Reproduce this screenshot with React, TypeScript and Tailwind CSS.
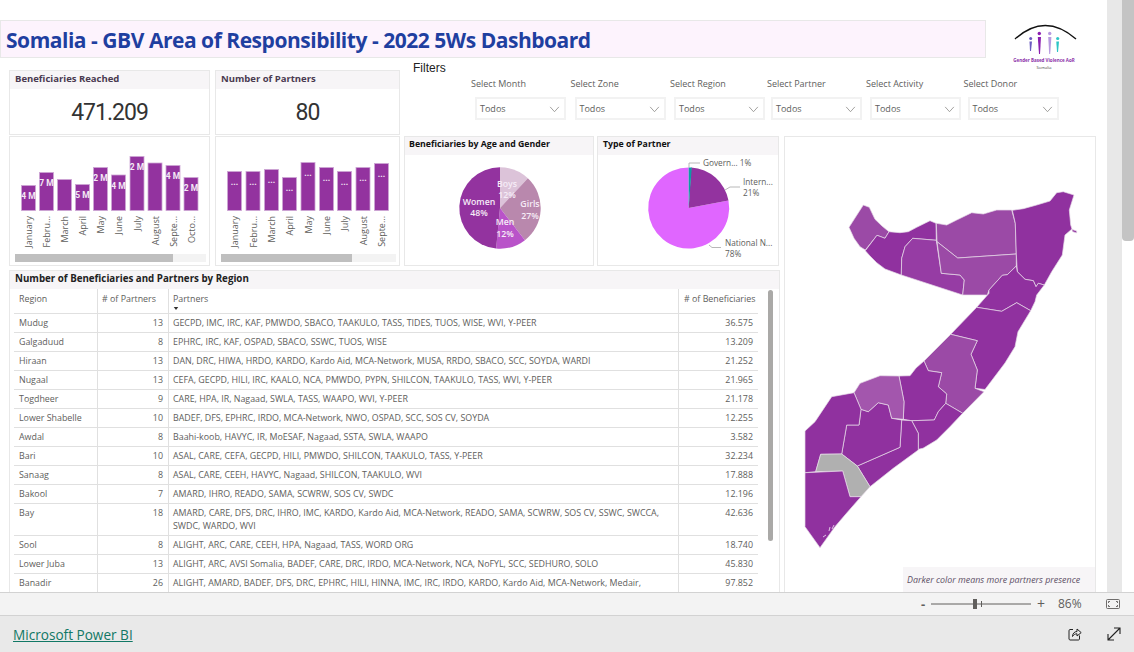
import { Fragment } from 'react';

const BAR = '#93339f';

const beneficiaryBars = [
  { x: 21.5, top: 185.5, label: '4 M', month: 'January' },
  { x: 39.5, top: 172.5, label: '7 M', month: 'Febru...' },
  { x: 57.5, top: 179.5, label: '', month: 'March' },
  { x: 75.5, top: 184.5, label: '5 M', month: 'April' },
  { x: 93.5, top: 167.5, label: '2 M', month: 'May' },
  { x: 111.5, top: 175, label: '4 M', month: 'June' },
  { x: 130, top: 156.5, label: '2 M', month: 'July' },
  { x: 148, top: 163, label: '', month: 'August' },
  { x: 166, top: 165.5, label: '4 M', month: 'Septe...' },
  { x: 184, top: 177.5, label: '2 M', month: 'Octo...' },
];

const partnerBars = [
  { x: 227.5, top: 171.5, label: '...', month: 'January' },
  { x: 246, top: 171.5, label: '...', month: 'Febru...' },
  { x: 264.5, top: 169.5, label: '...', month: 'March' },
  { x: 282.5, top: 177.5, label: '...', month: 'April' },
  { x: 301, top: 162.5, label: '...', month: 'May' },
  { x: 319.5, top: 167.5, label: '...', month: 'June' },
  { x: 337.5, top: 171.5, label: '...', month: 'July' },
  { x: 356, top: 167.5, label: '...', month: 'August' },
  { x: 374.5, top: 163.5, label: '...', month: 'Septe...' },
];

const filters = [
  { label: 'Select Month', col: 'w-[99.5px]' },
  { label: 'Select Zone', col: 'w-[99.5px]' },
  { label: 'Select Region', col: 'w-[97px]' },
  { label: 'Select Partner', col: 'w-[99px]' },
  { label: 'Select Activity', col: 'w-[97.5px]' },
  { label: 'Select Donor', col: 'w-[95px]' },
];

const rows = [
  ['Mudug', '13', 'GECPD, IMC, IRC, KAF, PMWDO, SBACO, TAAKULO, TASS, TIDES, TUOS, WISE, WVI, Y-PEER', '36.575'],
  ['Galgaduud', '8', 'EPHRC, IRC, KAF, OSPAD, SBACO, SSWC, TUOS, WISE', '13.209'],
  ['Hiraan', '13', 'DAN, DRC, HIWA, HRDO, KARDO, Kardo Aid, MCA-Network, MUSA, RRDO, SBACO, SCC, SOYDA, WARDI', '21.252'],
  ['Nugaal', '13', 'CEFA, GECPD, HILI, IRC, KAALO, NCA, PMWDO, PYPN, SHILCON, TAAKULO, TASS, WVI, Y-PEER', '21.965'],
  ['Togdheer', '9', 'CARE, HPA, IR, Nagaad, SWLA, TASS, WAAPO, WVI, Y-PEER', '21.178'],
  ['Lower Shabelle', '10', 'BADEF, DFS, EPHRC, IRDO, MCA-Network, NWO, OSPAD, SCC, SOS CV, SOYDA', '12.255'],
  ['Awdal', '8', 'Baahi-koob, HAVYC, IR, MoESAF, Nagaad, SSTA, SWLA, WAAPO', '3.582'],
  ['Bari', '10', 'ASAL, CARE, CEFA, GECPD, HILI, PMWDO, SHILCON, TAAKULO, TASS, Y-PEER', '32.234'],
  ['Sanaag', '8', 'ASAL, CARE, CEEH, HAVYC, Nagaad, SHILCON, TAAKULO, WVI', '17.888'],
  ['Bakool', '7', 'AMARD, IHRO, READO, SAMA, SCWRW, SOS CV, SWDC', '12.196'],
  ['Bay', '18', 'AMARD, CARE, DFS, DRC, IHRO, IMC, KARDO, Kardo Aid, MCA-Network, READO, SAMA, SCWRW, SOS CV, SSWC, SWCCA,\nSWDC, WARDO, WVI', '42.636'],
  ['Sool', '8', 'ALIGHT, ARC, CARE, CEEH, HPA, Nagaad, TASS, WORD ORG', '18.740'],
  ['Lower Juba', '13', 'ALIGHT, ARC, AVSI Somalia, BADEF, CARE, DRC, IRDO, MCA-Network, NCA, NoFYL, SCC, SEDHURO, SOLO', '45.830'],
  ['Banadir', '26', 'ALIGHT, AMARD, BADEF, DFS, DRC, EPHRC, HILI, HINNA, IMC, IRC, IRDO, KARDO, Kardo Aid, MCA-Network, Medair,', '97.852'],
];

// map regions, in page coordinates
const DARK = '#90319f';
const regions = [
  { fill: '#9b4aa6', d: 'M849 227.3L863.3 205L869.3 207.3L875 219.3L882 226L889 231.7L885 238.3L877 235.3L865.3 250L860 246.7L854 238.3Z' },
  { fill: DARK, d: 'M889 231.7L900 232.7L908.3 231.7L916.7 227.3L930 220.7L936 223.3L936.3 240.3L912.7 238.3L905 246.7L901.7 258.3L901.3 275L885 269L876.7 262.7L870 256L865.3 250.7L877 235.3L885 238.3Z' },
  { fill: '#963ca4', d: 'M912.7 238.3L936.3 240.3L941.3 273.3L960 275L964.3 280L962.7 295L901.3 275L901.7 258.3L905 246.7Z' },
  { fill: '#9b4aa6', d: 'M936.3 223.3L946.7 225L956.7 220L971.7 212.7L983.3 214L996.7 210L1011.7 210L1015.3 223.3L1016.3 254L957.7 258L937 241.7Z' },
  { fill: '#9b4aa6', d: 'M937 241.7L957.7 258L1016.3 254L1016.3 266L1007.3 274.7L1002.3 275.3L989 290L987.3 295L962.7 295L964.3 280L960 275L941.3 273.3Z' },
  { fill: DARK, d: 'M1012.3 210.3L1023.3 208.7L1036.7 205L1050 201L1056.7 192.7L1063.3 191.7L1074 195L1069.3 210L1070.7 225L1072 229L1065 235L1062.3 255L1051.7 271.7L1044.3 285L1038.3 283.3L1036 286.7L1033.3 280.7L1025 279.3L1017.3 271.7L1016.3 254L1015.3 223.3Z' },
  { fill: DARK, d: 'M1071.7 229.3L1076.7 231L1076.7 233L1072.7 231.7Z' },
  { fill: DARK, d: 'M1016.3 266L1017.3 271.7L1025 279.3L1033.3 280.7L1036 286.7L1038.3 283.3L1044.3 285L1036.7 295L1035 301.7L1030.7 310.7L1016.7 302.7L1001.7 311.3L976.7 307.3L989 293.3L989 290L1002.3 275.3L1007.3 274.7Z' },
  { fill: DARK, d: 'M976.7 307.3L1001.7 311.3L1016.7 302.7L1030.7 310.7L1018 331.7L1015 346.7L1005 363L985 389.5L975 388.3L977.3 370L971 354.3L977.3 340.7L950.7 334.3Z' },
  { fill: '#9b4aa6', d: 'M950.7 334.3L977.3 340.7L971 354.3L977.3 370L975 388.3L984 391.7L962.7 413.3L945.7 403.3L946.7 394L938.3 386.7L941.7 372.7L928.3 370.7L924 361Z' },
  { fill: DARK, d: 'M924 361L916 368L910 375.7L899 376L904 401.7L903.3 419.3L911.7 420.7L934.3 420L938.3 411.7L945.7 403.3L946.7 394L938.3 386.7L941.7 372.7L928.3 370.7Z' },
  { fill: DARK, d: 'M911.7 420.7L918.3 433.3L918.3 449.3L923 448.3L936.7 440L950 426.7L962.7 413.3L945.7 403.3L938.3 411.7L934.3 420Z' },
  { fill: DARK, d: 'M901.7 420L900 447.3L857.3 466L870 486.7L893.3 468.3L918.3 450L918.3 433.3L911.7 420.7Z' },
  { fill: DARK, d: 'M861 409.3L868.3 411.7L878.3 402.7L888.3 405L891.7 418.3L901.7 420L900 447.3L857.3 466L841.7 454L846.7 425L859 425Z' },
  { fill: '#a356ad', d: 'M854 392.7L860 383.3L880 375.7L899 376L904 401.7L903.3 419.3L891.7 418.3L888.3 405L878.3 402.7L868.3 411.7L861 409.3Z' },
  { fill: DARK, d: 'M805 431L815 421.7L831.7 396.7L854 392.7L861 409.3L859 425L846.7 425L841.7 454L820.7 454.3L815.7 471.7L805 472.7Z' },
  { fill: '#b0b0b0', d: 'M820.7 454.3L841.7 454L857.3 466L870 486.7L861 496.7L850 496.7L842.7 471L815.7 471.7Z' },
  { fill: DARK, d: 'M805 472.7L842.7 471L850 496.7L861 496.7L845 515L835 526.7L820 547.7L805 526.7Z' },
];

function slice(cx: number, cy: number, r: number, from: number, to: number) {
  const a = (from / 100) * 2 * Math.PI;
  const b = (to / 100) * 2 * Math.PI;
  const large = to - from > 50 ? 1 : 0;
  const x1 = cx + r * Math.sin(a);
  const y1 = cy - r * Math.cos(a);
  const x2 = cx + r * Math.sin(b);
  const y2 = cy - r * Math.cos(b);
  return `M${cx} ${cy}L${x1} ${y1}A${r} ${r} 0 ${large} 1 ${x2} ${y2}Z`;
}

function CardHeader({ title, tone }: { title: string; tone: string }) {
  return <div className={`h-[18px] bg-[#f7f5f7] font-bold whitespace-nowrap ${tone}`}>{title}</div>;
}

function ColumnChart({
  box,
  bars,
  track,
  thumb,
  wide,
}: {
  box: string;
  bars: { x: number; top: number; label: string; month: string }[];
  track: number[];
  thumb: number;
  wide: string;
}) {
  return (
    <div className={`h-[130px] shrink-0 border border-[#e8e8e8] bg-white ${wide}`}>
      <svg viewBox={box} className="block h-full w-full">
        {bars.map((b) => (
          <Fragment key={b.month}>
            <rect x={b.x} y={b.top} width={14} height={210.5 - b.top} fill={BAR} stroke="#cda6d4" strokeWidth={0.8} />
            {b.label && (
              <text
                x={b.x + 7}
                y={b.top + 13.5}
                textAnchor="middle"
                className="fill-[#f4e9f5] font-['Roboto',sans-serif] text-[8.5px] font-bold"
              >
                {b.label}
              </text>
            )}
            <text
              x={0}
              y={0}
              textAnchor="end"
              transform={`translate(${b.x + 10.5} 216) rotate(-90)`}
              className="fill-[#605e5c] text-[9px]"
            >
              {b.month}
            </text>
          </Fragment>
        ))}
        <rect x={track[0]} y={254} width={track[1] - track[0]} height={8} fill="#f3f3f3" />
        <rect x={track[0]} y={254} width={thumb - track[0]} height={8} fill="#bfbfbf" />
      </svg>
    </div>
  );
}

function Logo() {
  return (
    <div className="mt-[4px] ml-[27px] flex w-[66px] shrink-0 flex-col items-center">
      <svg viewBox="1013 25 66 32" className="block h-[32px] w-[66px] shrink-0">
        <path d="M1015 40Q1045 13 1076 40" fill="none" stroke="#111" strokeWidth={1.4} />
        <circle cx={1030.7} cy={39.5} r={1.5} fill="#6b5bc0" />
        <path d="M1029.5 42.5H1032L1031 52H1030Z" fill="#6b5bc0" />
        <circle cx={1039.3} cy={34.5} r={1.7} fill="#8b1fb0" />
        <path d="M1037.8 38H1041L1040 55H1039Z" fill="#8b1fb0" />
        <circle cx={1049.7} cy={34.5} r={1.7} fill="#b79be0" />
        <path d="M1048.2 38H1051.4L1050.2 55H1049.2Z" fill="#b79be0" />
        <circle cx={1057.7} cy={39.5} r={1.6} fill="#2cc5c5" />
        <path d="M1056.3 42.5H1059L1058 53H1057Z" fill="#2cc5c5" />
      </svg>
      <div className="mt-[1px] -ml-[4px] shrink-0 text-[4.5px] leading-[7px] font-bold whitespace-nowrap text-[#8a2fa8]">Gender Based Violence AoR</div>
      <div className="mt-[1px] -ml-[4px] shrink-0 text-[4px] leading-[6px] whitespace-nowrap text-[#444]">Somalia</div>
    </div>
  );
}

export default function App() {
  return (
    <div className="flex h-[652px] w-[1134px] flex-col overflow-hidden bg-white font-['Open_Sans',sans-serif]">
      <div className="flex h-[592px] shrink-0">
        <main className="w-[1107px] shrink-0 overflow-hidden">
          {/* titulo */}
          <div className="flex h-[58px] pt-[20px]">
            <div className="h-[38px] w-[986px] shrink-0 border border-[#e8e8e8] bg-[#fdf3fd] pl-[5px] text-[21px] leading-[39px] font-bold tracking-[-0.47px] whitespace-nowrap text-[#1f3fa0]">
              Somalia - GBV Area of Responsibility - 2022 5Ws Dashboard
            </div>
            <Logo />
          </div>

          {/* kpis y filtros */}
          <div className="flex h-[78px] pl-[9px]">
            <div className="flex gap-[5px] pt-[12px]">
              <div className="h-[65px] w-[201px] border border-[#e8e8e8]">
                <CardHeader title="Beneficiaries Reached" tone="pl-[5px] text-[9.5px] leading-[15px] text-[#4a3a50]" />
                <div className="pt-[4px] text-center font-['Roboto',sans-serif] text-[23px] leading-[40px] tracking-[-1px] text-[#333]">471.209</div>
              </div>
              <div className="h-[65px] w-[185px] border border-[#e8e8e8]">
                <CardHeader title="Number of Partners" tone="pl-[5px] text-[9.5px] leading-[15px] text-[#4a3a50]" />
                <div className="pt-[4px] text-center font-['Roboto',sans-serif] text-[23px] leading-[40px] tracking-[-1px] text-[#333]">80</div>
              </div>
            </div>
            <div className="ml-[13px] pt-[3px]">
              <div className="font-['Liberation_Sans',sans-serif] text-[12px] leading-[14px] text-[#222]">Filters</div>
              <div className="mt-[2px] ml-[58px] flex">
                {filters.map((f) => (
                  <div key={f.label} className={`shrink-0 ${f.col}`}>
                    <div className="h-[14px] text-[9px] leading-[14px] whitespace-nowrap text-[#605e5c]">{f.label}</div>
                    <div className="mt-[6px] ml-[4px] flex h-[23px] w-[91px] items-center justify-between border-2 border-[#f2f2f2] bg-white pt-[1px] pr-[4px] pl-[3px] text-[9px] text-[#605e5c]">
                      Todos
                      <svg viewBox="0 0 12 8" className="h-[7px] w-[11px]">
                        <path d="M1 1L6 6.5L11 1" fill="none" stroke="#8a8886" strokeWidth={0.9} />
                      </svg>
                    </div>
                  </div>
                ))}
              </div>
            </div>
          </div>

          {/* graficos, tabla y mapa */}
          <div className="flex h-[456px] pl-[9px]">
            <div className="flex w-[771px] shrink-0 flex-col">
              <div className="flex h-[130px] shrink-0">
                <ColumnChart box="10 137 199 128" bars={beneficiaryBars} track={[15, 206]} thumb={173} wide="w-[201px]" />
                <div className="w-[5px] shrink-0" />
                <ColumnChart box="216 137 183 128" bars={partnerBars} track={[221, 396]} thumb={352} wide="w-[185px]" />
                <div className="ml-[4px] h-[130px] w-[190px] shrink-0 border border-[#e8e8e8]">
                  <CardHeader title="Beneficiaries by Age and Gender" tone="pl-[4px] text-[8.75px] leading-[14px] text-[#111]" />
                  <svg viewBox="405 155 188 110" className="block h-[110px] w-[188px]">
                    <path d={slice(500, 208, 40.7, 0, 12)} fill="#dcc3d9" />
                    <path d={slice(500, 208, 40.7, 12, 39.5)} fill="#b988ad" />
                    <path d={slice(500, 208, 40.7, 39.5, 51.5)} fill="#b953c9" />
                    <path d={slice(500, 208, 40.7, 51.5, 100)} fill={BAR} />
                    <g textAnchor="middle" className="fill-[#f6ecf7] text-[8.75px] font-semibold">
                      <text x={507} y={187}>Boys</text>
                      <text x={507} y={198}>12%</text>
                      <text x={530} y={207}>Girls</text>
                      <text x={530} y={219}>27%</text>
                      <text x={505} y={225}>Men</text>
                      <text x={505} y={237}>12%</text>
                      <text x={479} y={205}>Women</text>
                      <text x={479} y={216}>48%</text>
                    </g>
                  </svg>
                </div>
                <div className="ml-[3px] h-[130px] w-[182px] shrink-0 border border-[#e8e8e8]">
                  <CardHeader title="Type of Partner" tone="pl-[5px] text-[8.75px] leading-[14px] text-[#111]" />
                  <svg viewBox="598 155 180 110" className="block h-[110px] w-[180px]">
                    <path d={slice(688.7, 208, 40.5, 22, 100)} fill="#e066ff" />
                    <path d={slice(688.7, 208, 40.5, 1, 22)} fill={BAR} />
                    <path d={slice(688.7, 208, 40.5, 0, 1.2)} fill="#0e9ba5" />
                    <g fill="none" stroke="#a6a6a6" strokeWidth={0.8}>
                      <path d="M689 167.5V163H700" />
                      <path d="M725 190L730 187H740" />
                      <path d="M709 245L712 247.5H721" />
                    </g>
                    <g className="fill-[#605e5c] text-[8.25px]">
                      <text x={703} y={166}>Govern... 1%</text>
                      <text x={743} y={185}>Intern...</text>
                      <text x={743} y={196}>21%</text>
                      <text x={725} y={246}>National N...</text>
                      <text x={725} y={257}>78%</text>
                    </g>
                  </svg>
                </div>
              </div>

              <div className="relative mt-[4px] min-h-0 flex-1 overflow-hidden border border-b-0 border-[#e8e8e8]">
                <CardHeader title="Number of Beneficiaries and Partners by Region" tone="pl-[5px] text-[9.75px] leading-[16px] text-[#222]" />
                <div className="ml-[4px] w-[744px] text-[8.87px] text-[#605e5c]">
                  <div className="grid h-[25px] grid-cols-[83px_71px_510px_80px] border-b border-[#e0e0e0] leading-[20px]">
                    <div className="pl-[5px]">Region</div>
                    <div className="border-l border-[#e0e0e0] pl-[4px]"># of Partners</div>
                    <div className="border-l border-[#e0e0e0] pl-[4px]">
                      Partners
                      <svg viewBox="0 0 6 4" className="-mt-[2px] block h-[3px] w-[6px]">
                        <path d="M0 0H6L3 4Z" fill="#323130" />
                      </svg>
                    </div>
                    <div className="border-l border-[#e0e0e0] pl-[5px]"># of Beneficiaries</div>
                  </div>
                  {rows.map((r) => (
                    <div
                      key={r[0]}
                      className="grid grid-cols-[83px_71px_510px_80px] border-b border-[#e0e0e0] leading-[13px]"
                    >
                      <div className="pt-[3px] pb-[2px] pl-[5px]">{r[0]}</div>
                      <div className="border-l border-[#e0e0e0] pt-[3px] pb-[2px] pr-[5px] text-right">{r[1]}</div>
                      <div className="border-l border-[#e0e0e0] pt-[3px] pb-[2px] pl-[4px] whitespace-pre-line">{r[2]}</div>
                      <div className="border-l border-[#e0e0e0] pt-[3px] pb-[2px] pr-[5px] text-right">{r[3]}</div>
                    </div>
                  ))}
                </div>
                <div className="absolute top-[19px] left-[758px] h-[251px] w-[5px] rounded-full bg-[#aaa9a7]" />
              </div>
            </div>

            <div className="ml-[4px] flex w-[312px] shrink-0 flex-col border border-b-0 border-[#e8e8e8]">
              <svg viewBox="785 137 310 430" className="block h-[430px] w-[310px] shrink-0">
                {regions.map((r) => (
                  <path key={r.d} d={r.d} fill={r.fill} stroke="#e6dbe8" strokeWidth={0.7} strokeLinejoin="round" />
                ))}
                <path d="M823 537L826 535M829 531L830 527M832 529L834 525" fill="none" stroke="#f3e8f5" strokeWidth={0.8} />
              </svg>
              <div className="flex h-[25px] w-[192px] items-center self-end bg-[#f7f5f7] pl-[4px] text-[8.9px] whitespace-nowrap text-[#5d5066] italic">
                Darker color means more partners presence
              </div>
            </div>
          </div>
        </main>
        <div className="w-[15px] shrink-0 bg-[#e8e8e8]" />
        <div className="w-[12px] shrink-0">
          <div className="h-[241px] rounded-b-[4px] bg-[#c4c4c4]" />
        </div>
      </div>

      {/* barra de zoom */}
      <div className="flex h-[24px] shrink-0 items-center border-y border-[#d2d2d2] bg-[#f3f3f3] pl-[921px] text-[#605e5c]">
        <span className="w-[10px] text-[13px] leading-none font-bold">-</span>
        <svg viewBox="0 0 100 12" className="h-[12px] w-[100px]">
          <path d="M0 6H100" stroke="#605e5c" strokeWidth={1} />
          <rect x={42} y={1} width={4} height={10} fill="#605e5c" />
          <path d="M50.5 3V9" stroke="#605e5c" strokeWidth={1} />
        </svg>
        <span className="ml-[4px] w-[12px] text-center text-[14px] leading-none">+</span>
        <span className="ml-[11px] w-[26px] text-[12px] whitespace-nowrap">86%</span>
        <svg viewBox="0 0 14 10" fill="none" className="ml-[22px] h-[10px] w-[14px]" stroke="#605e5c" strokeWidth={0.9}>
          <rect x={0.5} y={0.5} width={13} height={9} rx={1} />
          <path d="M4 2.5H2.5V4M10 2.5H11.5V4M4 7.5H2.5V6M10 7.5H11.5V6" />
        </svg>
      </div>

      {/* pie */}
      <div className="flex min-h-0 flex-1 items-center bg-[#e9e9e9] pl-[13px]">
        <a href="#" className="mt-[3px] text-[13.6px] text-[#117865] underline">Microsoft Power BI</a>
        <svg viewBox="0 0 14 14" fill="none" stroke="#222" strokeWidth={1} className="ml-[935px] h-[14px] w-[14px]">
          <path d="M5 2.5H2A1.2 1.2 0 0 0 1 3.7V12A1.2 1.2 0 0 0 2 13H10.5A1.2 1.2 0 0 0 11.5 12V8.5" />
          <path d="M4.5 9.5C4.5 6.5 6.5 4.5 9 4.5V2L13.2 5.6L9 9V6.8C7 6.8 5.5 7.8 4.5 9.5Z" />
        </svg>
        <svg viewBox="0 0 14 14" fill="none" stroke="#222" strokeWidth={1.1} className="ml-[25px] h-[14px] w-[14px]">
          <path d="M1 13L13 1M7 1H13V7M1 7V13H7" />
        </svg>
      </div>
    </div>
  );
}
